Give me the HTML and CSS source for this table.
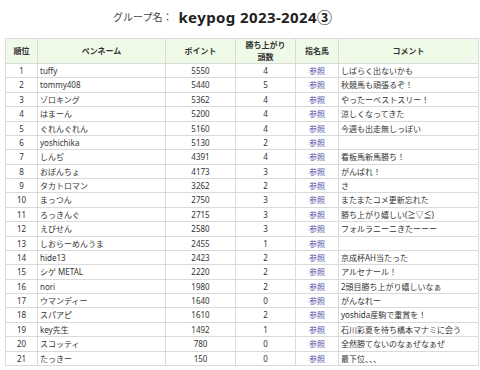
FILE: index.html
```html
<!DOCTYPE html>
<html lang="ja">
<head>
<meta charset="utf-8">
<link rel="stylesheet" href="styles.css">
</head>
<body>
<div class="title"><span class="label">グループ名：</span><span class="group">keypog 2023-2024③</span></div>
<table class="rank">
<thead>
<tr><th class="c-rank">順位</th><th class="c-name">ペンネーム</th><th class="c-pt">ポイント</th><th class="c-win">勝ち上がり<br>頭数</th><th class="c-horse">指名馬</th><th class="c-cmt">コメント</th></tr>
</thead>
<tbody>
<tr><td class="ctr">1</td><td>tuffy</td><td class="ctr">5550</td><td class="ctr">4</td><td class="ctr"><a>参照</a></td><td>しばらく出ないかも</td></tr>
<tr><td class="ctr">2</td><td>tommy408</td><td class="ctr">5440</td><td class="ctr">5</td><td class="ctr"><a>参照</a></td><td>秋競馬も頑張るぞ！</td></tr>
<tr><td class="ctr">3</td><td>ゾロキング</td><td class="ctr">5362</td><td class="ctr">4</td><td class="ctr"><a>参照</a></td><td>やったーベストスリー！</td></tr>
<tr><td class="ctr">4</td><td>はまーん</td><td class="ctr">5200</td><td class="ctr">4</td><td class="ctr"><a>参照</a></td><td>涼しくなってきた</td></tr>
<tr><td class="ctr">5</td><td>ぐれんぐれん</td><td class="ctr">5160</td><td class="ctr">4</td><td class="ctr"><a>参照</a></td><td>今週も出走無しっぽい</td></tr>
<tr><td class="ctr">6</td><td>yoshichika</td><td class="ctr">5130</td><td class="ctr">2</td><td class="ctr"><a>参照</a></td><td></td></tr>
<tr><td class="ctr">7</td><td>しんぢ</td><td class="ctr">4391</td><td class="ctr">4</td><td class="ctr"><a>参照</a></td><td>看板馬新馬勝ち！</td></tr>
<tr><td class="ctr">8</td><td>おぼんちょ</td><td class="ctr">4173</td><td class="ctr">3</td><td class="ctr"><a>参照</a></td><td>がんばれ！</td></tr>
<tr><td class="ctr">9</td><td>タカトロマン</td><td class="ctr">3262</td><td class="ctr">2</td><td class="ctr"><a>参照</a></td><td>さ</td></tr>
<tr><td class="ctr">10</td><td>まっつん</td><td class="ctr">2750</td><td class="ctr">3</td><td class="ctr"><a>参照</a></td><td>またまたコメ更新忘れた</td></tr>
<tr><td class="ctr">11</td><td>ろっきんぐ</td><td class="ctr">2715</td><td class="ctr">3</td><td class="ctr"><a>参照</a></td><td>勝ち上がり嬉しい(≧▽≦)</td></tr>
<tr><td class="ctr">12</td><td>えびせん</td><td class="ctr">2580</td><td class="ctr">3</td><td class="ctr"><a>参照</a></td><td>フォルラニーニきたーーー</td></tr>
<tr><td class="ctr">13</td><td>しおらーめんうま</td><td class="ctr">2455</td><td class="ctr">1</td><td class="ctr"><a>参照</a></td><td></td></tr>
<tr><td class="ctr">14</td><td>hide13</td><td class="ctr">2423</td><td class="ctr">2</td><td class="ctr"><a>参照</a></td><td>京成杯AH当たった</td></tr>
<tr><td class="ctr">15</td><td>シゲ METAL</td><td class="ctr">2220</td><td class="ctr">2</td><td class="ctr"><a>参照</a></td><td>アルセナール！</td></tr>
<tr><td class="ctr">16</td><td>nori</td><td class="ctr">1980</td><td class="ctr">2</td><td class="ctr"><a>参照</a></td><td>2頭目勝ち上がり嬉しいなぁ</td></tr>
<tr><td class="ctr">17</td><td>ウマンディー</td><td class="ctr">1640</td><td class="ctr">0</td><td class="ctr"><a>参照</a></td><td>がんなれー</td></tr>
<tr><td class="ctr">18</td><td>スパアピ</td><td class="ctr">1610</td><td class="ctr">2</td><td class="ctr"><a>参照</a></td><td>yoshida産駒で重賞を！</td></tr>
<tr><td class="ctr">19</td><td>key先生</td><td class="ctr">1492</td><td class="ctr">1</td><td class="ctr"><a>参照</a></td><td>石川彩夏を待ち橋本マナミに会う</td></tr>
<tr><td class="ctr">20</td><td>スコッティ</td><td class="ctr">780</td><td class="ctr">0</td><td class="ctr"><a>参照</a></td><td>全然勝てないのなぁぜなぁぜ</td></tr>
<tr><td class="ctr">21</td><td>たっきー</td><td class="ctr">150</td><td class="ctr">0</td><td class="ctr"><a>参照</a></td><td>最下位、、、</td></tr>
</tbody>
</table>
</body>
</html>
```

FILE: styles.css
```css
html, body {
  margin: 0;
  padding: 0;
  background: #ffffff;
}
body {
  font-family: "Noto Sans", "Noto Sans CJK JP", sans-serif;
  color: #333333;
}
.title {
  height: 38px;
  padding-left: 113px;
  display: flex;
  align-items: center;
  gap: 6px;
  padding-bottom: 6px;
  box-sizing: border-box;
}
.title .label {
  font-size: 10px;
  color: #444;
}
.title .group {
  font-size: 15px;
  letter-spacing: 0.4px;
  font-weight: bold;
  color: #222;
}
.rank {
  margin-left: 5px;
  border-collapse: collapse;
  table-layout: fixed;
  width: 474px;
  font-size: 8px;
}
.rank th, .rank td {
  border: 1px solid #dadada;
  padding: 0 2px;
  white-space: nowrap;
  overflow: hidden;
}
.rank th {
  background: #effbe8;
  font-weight: bold;
  height: 24px;
  line-height: 12px;
  color: #333;
  text-align: center;
}
.rank td {
  height: 13.38px;
  line-height: 13.38px;
}
.rank .ctr {
  text-align: center;
}
.rank a {
  color: #4f4fa6;
}
.c-rank { width: 27px; }
.c-name { width: 123px; }
.c-pt { width: 65px; }
.c-win { width: 55px; }
.c-horse { width: 38px; }
.c-cmt { width: 135px; }
```
